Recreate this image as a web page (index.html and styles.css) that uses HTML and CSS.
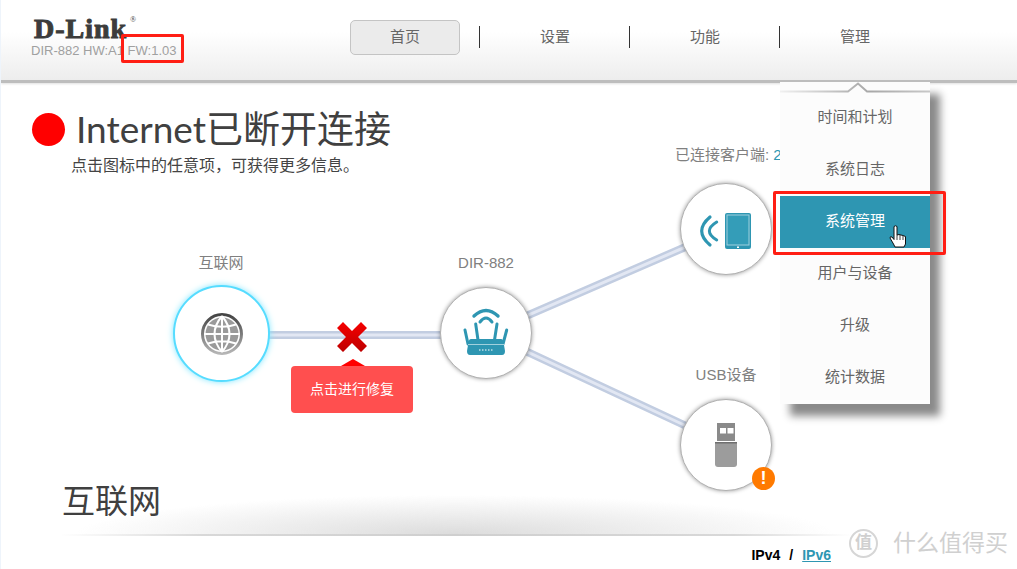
FILE: index.html
```html
<!DOCTYPE html>
<html lang="zh-CN">
<head>
    <meta charset="utf-8">
    <title>D-Link DIR-882</title>
    <link rel="stylesheet" href="styles.css">
</head>
<body>
<div class="page">

    <header class="top">
        <div class="brand">
            <div class="logo">D-Link<sup class="reg">®</sup></div>
            <div class="model">DIR-882 HW:A1 FW:1.03</div>
        </div>
        <nav class="nav">
            <a class="nav-item nav-current">首页</a>
            <span class="sep"></span>
            <a class="nav-item">设置</a>
            <span class="sep"></span>
            <a class="nav-item">功能</a>
            <span class="sep"></span>
            <a class="nav-item">管理</a>
        </nav>
    </header>

    <section class="intro">
        <div class="status">
            <span class="dot"></span>
            <h1>Internet已断开连接</h1>
        </div>
        <p class="hint">点击图标中的任意项，可获得更多信息。</p>
    </section>

    <!-- network map: nodes sit on a free canvas -->
    <section class="map">
        <svg class="links" width="1016" height="310" viewBox="0 0 1016 310">
            <g class="link-edge">
                <path d="M267 155H440M486 153L726 49M486 153L726 265"/>
            </g>
            <g class="link-core">
                <path d="M267 155H440M486 153L726 49M486 153L726 265"/>
            </g>
        </svg>

        <div class="label label-net">互联网</div>
        <div class="node node-net">
            <svg width="44" height="44" viewBox="0 0 44 44">
                <defs>
                    <linearGradient id="globeRing" x1="0" y1="0" x2="0" y2="1">
                        <stop offset="0" stop-color="#444"/>
                        <stop offset="1" stop-color="#b5b5b5"/>
                    </linearGradient>
                </defs>
                <circle cx="22" cy="22" r="19.5" fill="#fff" stroke="url(#globeRing)" stroke-width="3"/>
                <circle cx="22" cy="22" r="16.500" fill="#9a9a9a"/>
                <g fill="none" stroke="#fff" stroke-width="2">
                    <path d="M22 4V40M4 22H40M8 12.500Q22 17 36 12.500M8 31.500Q22 27 36 31.500"/>
                    <path d="M22 4Q7 22 22 40M22 4Q37 22 22 40"/>
                </g>
            </svg>
        </div>

        <svg class="cross" width="32" height="32" viewBox="0 0 32 32">
            <defs>
                <linearGradient id="crossFill" x1="0" y1="0" x2="0" y2="1">
                    <stop offset="0" stop-color="#f60000"/>
                    <stop offset="1" stop-color="#bd0000"/>
                </linearGradient>
            </defs>
            <path fill="url(#crossFill)" d="M7 1L16 10L25 1L31 7L22 16L31 25L25 31L16 22L7 31L1 25L10 16L1 7Z"/>
        </svg>
        <div class="fix">点击进行修复</div>

        <div class="label label-router">DIR-882</div>
        <div class="node node-router">
            <svg width="90" height="90" viewBox="0 0 90 90">
                <g fill="none" stroke="#2e96b2" stroke-linecap="round">
                    <path stroke-width="3.400" d="M33 28Q45 17 57 28"/>
                    <path stroke-width="3" d="M39 34Q45 26 51 34"/>
                    <path stroke-width="3" d="M24 42L27 56M65.700 42L62 56M34.700 36L37 52M56 36L53.500 52"/>
                </g>
                <path fill="#2e96b2" d="M30 51H60Q62 51 62.500 54L64 63Q64 67 61 67H29Q26 67 26 63L27.500 54Q28 51 30 51Z"/>
                <path fill="none" stroke="#bfe0e8" stroke-width=".8" d="M27 56.500H63"/>
                <path fill="none" stroke="#fff" stroke-width="1.200" stroke-dasharray="1.500 1.500" d="M38 62H52"/>
            </svg>
        </div>

        <div class="label label-clients">已连接客户端: <span class="count">2</span></div>
        <div class="node node-clients">
            <svg width="90" height="90" viewBox="0 0 90 90">
                <g fill="none" stroke="#2e96b2" stroke-linecap="round">
                    <path stroke-width="3.200" d="M29 33Q12.400 47 29 61"/>
                    <path stroke-width="3" d="M35.700 38Q21 47 35.700 56"/>
                </g>
                <rect x="44" y="29" width="26" height="36" rx="2" fill="#2e96b2"/>
                <rect x="46" y="31" width="22" height="30" fill="#349db8" stroke="#9fd0de" stroke-width="1"/>
                <rect x="56" y="62.500" width="2" height="1.500" fill="#fff"/>
            </svg>
        </div>

        <div class="label label-usb">USB设备</div>
        <div class="node node-usb">
            <svg width="90" height="90" viewBox="0 0 90 90">
                <rect x="36" y="23" width="18" height="18" fill="#8a8a8a"/>
                <rect x="39" y="28" width="6" height="5.500" fill="#fff"/>
                <rect x="46.500" y="28" width="6" height="5.500" fill="#fff"/>
                <path fill="#9c9c9c" d="M34 42H56V64Q56 67 53 67H37Q34 67 34 64Z"/>
                <rect x="34" y="42" width="22" height="1.500" fill="#6f6f6f"/>
            </svg>
        </div>
        <div class="warn">!</div>
    </section>

    <section class="section-head">
        <h2>互联网</h2>
    </section>
    <div class="proto"><b>IPv4</b><b class="slash">/</b><a class="proto-link">IPv6</a></div>

    <!-- dropdown under 管理 -->
    <div class="menu">
        <svg class="menu-tip" width="150" height="12" viewBox="0 0 150 12">
            <defs>
                <linearGradient id="tipLine" x1="0" y1="0" x2="1" y2="0">
                    <stop offset="0" stop-color="#f0f0f0"/>
                    <stop offset=".45" stop-color="#b8b8b8"/>
                    <stop offset=".6" stop-color="#a8a8a8"/>
                    <stop offset="1" stop-color="#c8c8c8"/>
                </linearGradient>
            </defs>
            <path fill="none" stroke="url(#tipLine)" stroke-width="2" d="M0 9.500H68L78 1.500L87 9.500H150"/>
        </svg>
        <a class="menu-item">时间和计划</a>
        <a class="menu-item">系统日志</a>
        <a class="menu-item menu-active">系统管理</a>
        <a class="menu-item">用户与设备</a>
        <a class="menu-item">升级</a>
        <a class="menu-item">统计数据</a>
    </div>

    <svg class="hand" width="18" height="26" viewBox="0 0 18 26">
        <path fill="#fff" stroke="#111" stroke-width="1" d="M5 2.500Q6.500 1 8 2.500V11L10 10.500L12 11L14 11.500L16.500 12.500V20L15 23H6L4.500 20L1 14Q1 12 3 13L5 15.500Z"/>
        <path fill="none" stroke="#111" stroke-width=".8" d="M8 11V16M11 11V16M14 12V16"/>
    </svg>

    <div class="mark mark-fw"></div>
    <div class="mark mark-item"></div>

    <div class="stamp">
        <span class="stamp-ring">值</span>
        <span class="stamp-text">什么值得买</span>
    </div>
</div>
</body>
</html>
```

FILE: styles.css
```css
html, body {
    margin: 0;
    padding: 0;
    background-color: #fff;
}

.page {
    position: relative;
    width: 1016px;
    height: 569px;
    overflow: hidden;
    border-left: 1px solid #eef4fb;
    font-family: "Liberation Sans", "Noto Sans CJK SC", sans-serif;
    color: #666;
}

/* header */
.top {
    display: flex;
    height: 80px;
    border-bottom: 3px solid #bdbdbd;
    background: linear-gradient(to bottom, #fff 0, #fff 40%, #ededed 100%);
    box-shadow: 0 1px 2px rgba(0, 0, 0, .12);
}

.brand {
    box-sizing: border-box;
    width: 329px;
    padding: 14px 0 0 30px;
}

.logo {
    position: relative;
    width: 102px;
    margin-left: 3px;
    font-family: "Liberation Serif", serif;
    font-size: 28px;
    font-weight: bold;
    line-height: 30px;
    color: #3c3c3c;
    letter-spacing: 1px;
    -webkit-text-stroke: 1px #3c3c3c;
}

.reg {
    position: absolute;
    top: 2px;
    right: 0;
    font-size: 8px;
    line-height: 8px;
    font-weight: normal;
    letter-spacing: 0;
    -webkit-text-stroke: 0;
}

.model {
    font-size: 13px;
    line-height: 14px;
    color: #a0a0a0;
}

.nav {
    display: flex;
    align-items: flex-start;
    padding: 20px 0 0 20px;
}

.nav-item {
    box-sizing: border-box;
    width: 110px;
    height: 35px;
    font-size: 15px;
    line-height: 31px;
    text-align: center;
    color: #666;
    border: 1px solid transparent;
}

.nav-current {
    background-color: #ebebeb;
    border-color: #c4c4c4;
    border-radius: 5px;
}

.sep {
    width: 1px;
    height: 22px;
    margin: 6px 20px 0 19px;
    background-color: #333;
}

/* title */
.intro {
    height: 97px;
    padding: 24px 0 0 31px;
    box-sizing: border-box;
}

.status {
    display: flex;
    align-items: center;
    gap: 11px;
}

.dot {
    width: 33px;
    height: 33px;
    border-radius: 50%;
    background-color: #f00;
}

h1 {
    margin: 0;
    font-family: Lato, "Noto Sans CJK SC", sans-serif;
    font-size: 37px;
    font-weight: 400;
    line-height: 44px;
    color: #404040;
}

.hint {
    margin: 5px 0 0 39px;
    font-size: 16px;
    line-height: 20px;
    color: #444;
}

/* network map */
.map {
    position: relative;
    height: 310px;
}

.links {
    position: absolute;
    left: 0;
    top: 0;
}

.link-edge path {
    fill: none;
    stroke: #c2cde1;
    stroke-width: 8;
}

.link-core path {
    fill: none;
    stroke: #e2e7f3;
    stroke-width: 3;
}

.label {
    position: absolute;
    font-size: 15px;
    line-height: 18px;
    color: #808080;
    text-align: center;
    white-space: nowrap;
}

.label-net { left: 170px; top: 74px; width: 100px; }
.label-router { left: 435px; top: 74px; width: 100px; }
.label-clients { left: 674px; top: -34px; }
.label-usb { left: 675px; top: 186px; width: 100px; }

.count { color: #2e96b2; }

.node {
    position: absolute;
    box-sizing: border-box;
    width: 92px;
    height: 92px;
    display: flex;
    align-items: center;
    justify-content: center;
    border-radius: 50%;
    background-color: #fff;
    border: 1px solid #b0b0b0;
    box-shadow: 0 0 4px rgba(0, 0, 0, .4);
}

.node-net {
    left: 172px;
    top: 105px;
    width: 97px;
    height: 97px;
    border: 2px solid #56dcff;
    box-shadow: 0 0 6px #7fe6ff;
}

.node-router { left: 439px; top: 107px; }
.node-clients { left: 679px; top: 3px; }
.node-usb { left: 679px; top: 219px; }

.cross {
    position: absolute;
    left: 335px;
    top: 141px;
}

.fix {
    position: absolute;
    left: 290px;
    top: 186px;
    width: 122px;
    height: 47px;
    border-radius: 4px;
    background-color: #ff4f4f;
    font-size: 14px;
    line-height: 47px;
    text-align: center;
    color: #fff;
}

.fix::before {
    content: "";
    position: absolute;
    left: 50px;
    top: -7px;
    border-left: 12px solid transparent;
    border-right: 12px solid transparent;
    border-bottom: 7px solid #f00;
}

.warn {
    position: absolute;
    left: 751px;
    top: 287px;
    width: 23px;
    height: 23px;
    border-radius: 50%;
    background-color: #ff7a00;
    font-size: 18px;
    font-weight: bold;
    line-height: 23px;
    text-align: center;
    color: #fff;
}

/* section heading */
.section-head {
    position: relative;
    box-sizing: border-box;
    width: 790px;
    height: 54px;
    margin-top: -8px;
    margin-left: 60px;
    border-bottom: 2px solid transparent;
    border-image: linear-gradient(to right, #fff, #d8d8d8 18%, #cfcfcf 50%, #d8d8d8 85%, #fff) 1;
    background: radial-gradient(ellipse 48% 75% at 50% 100%, #dcdcdc, rgba(255, 255, 255, 0));
}

h2 {
    margin: 0;
    padding-left: 1px;
    font-size: 33px;
    font-weight: 400;
    line-height: 40px;
    color: #404040;
}

.proto {
    display: flex;
    justify-content: flex-end;
    gap: 9px;
    width: 830px;
    padding-top: 11px;
    font-size: 14px;
    line-height: 16px;
    color: #000;
}

.proto-link {
    font-weight: bold;
    color: #2e96b2;
    text-decoration: underline;
}

/* dropdown */
.menu {
    position: absolute;
    left: 779px;
    top: 82px;
    box-sizing: border-box;
    width: 150px;
    height: 322px;
    padding-top: 10px;
    background-color: #fcfcfc;
    box-shadow: 10px 12px 8px #8a8a8a;
}

.menu-tip {
    position: absolute;
    left: 0;
    top: 0;
}

.menu-item {
    display: block;
    height: 52px;
    font-size: 15px;
    line-height: 50px;
    text-align: center;
    color: #666;
}

.menu-active {
    color: #fff;
    background-color: #2e96b2;
}

.hand {
    position: absolute;
    left: 888px;
    top: 224px;
}

/* red markers drawn over the shot */
.mark {
    position: absolute;
    box-sizing: border-box;
    border: 3px solid #ff1e14;
    border-radius: 2px;
}

.mark-fw { left: 120px; top: 34px; width: 63px; height: 29px; }
.mark-item { left: 772px; top: 191px; width: 173px; height: 64px; }

.stamp {
    position: absolute;
    left: 848px;
    top: 529px;
    display: flex;
    align-items: center;
    gap: 15px;
    color: #d0d0d0;
}

.stamp-ring {
    box-sizing: border-box;
    width: 29px;
    height: 29px;
    border: 2px solid #d6d6d6;
    border-radius: 50%;
    font-size: 17px;
    font-weight: bold;
    line-height: 24px;
    text-align: center;
}

.stamp-text {
    font-size: 23px;
    line-height: 29px;
}
```
